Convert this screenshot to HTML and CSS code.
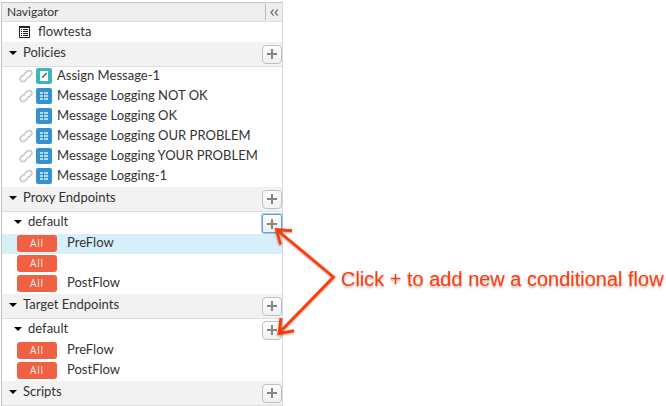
FILE: index.html
```html
<!DOCTYPE html>
<html lang="en">
<head>
<meta charset="utf-8">
<title>Navigator</title>
<link rel="stylesheet" href="styles.css">
</head>
<body>
<svg class="defs" aria-hidden="true">
  <symbol id="link" viewBox="0 0 14 14"><g fill="none" stroke="#c6c6c6" stroke-width="1.600" stroke-linecap="round"><path d="M6 4.200 8 2.300Q9.900.700 11.900 2.200Q13.800 4 12.200 6L10.400 7.700Q9.600 8.300 8.800 8.100"/><path d="M8 9.800 6 11.700Q4.100 13.300 2.100 11.800Q.200 10 1.800 8L3.600 6.300Q4.400 5.700 5.200 5.900"/></g></symbol>
  <symbol id="log" viewBox="0 0 16 16"><rect width="16" height="16" rx="2" fill="#3492d2"/><path d="M4 4h3v2H4zM8 4h4v2H8zM4 7h3v2H4zM8 7h4v2H8zM4 10h3v2H4zM8 10h4v2H8z" fill="#b9dcf2"/></symbol>
  <symbol id="assign" viewBox="0 0 16 16"><rect width="16" height="16" rx="2" fill="#3cb6b9"/><path d="M4 3h8v10H4z" fill="#fff"/><path d="m5.500 10.500 1-2.200 3.700-3.700 1 1-3.700 3.700z" fill="#4c6061"/></symbol>
  <symbol id="plus" viewBox="0 0 10 10"><path d="M5 0v10M0 5h10" stroke="#858585" stroke-width="2"/></symbol>
</svg>
<nav class="panel">
  <header class="head"><span>Navigator</span><span class="collapse"><svg width="9" height="7" viewBox="0 0 9 7"><path d="M3.500.5 1 3.500l2.500 3M7.700.5l-2.500 3 2.500 3" fill="none" stroke="#777" stroke-width="1.300"/></svg></span></header>
  <div class="row root"><svg width="11" height="12" viewBox="0 0 11 12"><path d="M.5 1v10.500h10V1" fill="#fff" stroke="#222"/><path d="M0 0h11v2H0z" fill="#222"/><path d="M2 3.500h1M4 3.500h5M2 5.500h1M4 5.500h5M2 7.500h1M4 7.500h5M2 9.500h1M4 9.500h5" stroke="#222"/></svg><span>flowtesta</span></div>

  <div class="section"><i class="caret"></i><span>Policies</span><button class="add"><svg><use href="#plus"/></svg></button></div>
  <div class="row policy"><svg class="link"><use href="#link"/></svg><svg class="icon"><use href="#assign"/></svg><span>Assign Message-1</span></div>
  <div class="row policy"><svg class="link"><use href="#link"/></svg><svg class="icon"><use href="#log"/></svg><span>Message Logging NOT OK</span></div>
  <div class="row policy"><svg class="link"></svg><svg class="icon"><use href="#log"/></svg><span>Message Logging OK</span></div>
  <div class="row policy"><svg class="link"><use href="#link"/></svg><svg class="icon"><use href="#log"/></svg><span>Message Logging OUR PROBLEM</span></div>
  <div class="row policy"><svg class="link"><use href="#link"/></svg><svg class="icon"><use href="#log"/></svg><span>Message Logging YOUR PROBLEM</span></div>
  <div class="row policy"><svg class="link"><use href="#link"/></svg><svg class="icon"><use href="#log"/></svg><span>Message Logging-1</span></div>

  <div class="section"><i class="caret"></i><span>Proxy Endpoints</span><button class="add"><svg><use href="#plus"/></svg></button></div>
  <div class="endpoint"><i class="caret"></i><span>default</span><button class="add focused"><svg><use href="#plus"/></svg></button></div>
  <div class="row flow selected"><b class="tag">All</b><span>PreFlow</span></div>
  <div class="row flow"><b class="tag">All</b></div>
  <div class="row flow"><b class="tag">All</b><span>PostFlow</span></div>

  <div class="section"><i class="caret"></i><span>Target Endpoints</span><button class="add"><svg><use href="#plus"/></svg></button></div>
  <div class="endpoint"><i class="caret"></i><span>default</span><button class="add"><svg><use href="#plus"/></svg></button></div>
  <div class="row flow"><b class="tag">All</b><span>PreFlow</span></div>
  <div class="row flow"><b class="tag">All</b><span>PostFlow</span></div>

  <div class="section"><i class="caret"></i><span>Scripts</span><button class="add"><svg><use href="#plus"/></svg></button></div>
  <div class="end"></div>
</nav>
<svg class="arrows" width="70" height="120" viewBox="270 220 70 120"><path d="M277 230 333.500 277 279.500 332.500M292 230.700 276.500 229.500 280.500 244.500M281 318 279 333.500 294 330.800" fill="none" stroke="#ff3c0a" stroke-width="2.900"/></svg>
<div class="note">Click + to add new a conditional flow</div>
</body>
</html>
```
FILE: styles.css
```css
* { box-sizing: border-box; }
body {
  margin: 0;
  width: 666px;
  height: 406px;
  overflow: hidden;
  position: relative;
  background: #fff;
  color: #333;
  font: 13.04px/20px Lato, "Liberation Sans", sans-serif;
}
svg { display: block; flex: none; }
.defs { position: absolute; width: 0; height: 0; }
.panel {
  width: 282px;
  height: 404px;
  margin: 2px 0 0 1px;
  border: 1px solid #c4c4c4;
  border-right-color: #d7d9da;
  border-bottom: 0;
  white-space: nowrap;
}
.head {
  display: flex;
  justify-content: space-between;
  align-items: center;
  height: 19px;
  padding-left: 5px;
  background: #eee;
  border-bottom: 1px solid #dedede;
  font-size: 12px;
  line-height: 18px;
}
.collapse {
  display: flex;
  align-items: center;
  width: 17px;
  height: 16px;
  padding-left: 4px;
  border-left: 1px solid #b5bdc0;
}
.row { display: flex; align-items: center; height: 20px; }
.root { padding-left: 17px; gap: 8px; }
.root span { margin-top: -3px; }
.section, .endpoint { display: flex; align-items: center; }
.section {
  height: 25px;
  padding-left: 7px;
  background: #f2f2f2;
  border-bottom: 1px solid #dedede;
}
.section span { margin-top: -4px; }
.endpoint { height: 22px; padding-left: 12px; }
.endpoint span { margin-top: -4px; }
.caret {
  margin: -3px 6px 0 0;
  border: 4px solid transparent;
  border-top-color: #000;
  border-bottom: 0;
}
.add {
  display: grid;
  place-items: center;
  width: 20px;
  height: 19px;
  margin-left: auto;
  padding: 0;
  border: 1px solid #b8c2c6;
  border-radius: 4px;
  background: linear-gradient(#fff, #f0f0f0);
}
.add svg { width: 10px; height: 10px; }
.focused { height: 19px; margin-top: 1px; border-color: #6f9ce8; border-radius: 2px; box-shadow: 0 0 0 1px #a9c5f5; }
.policy { padding-left: 17px; }
.policy span { margin-top: -4px; }
.link { width: 14px; height: 14px; margin: -2px 3px 0 0; }
.icon { width: 16px; height: 16px; margin: -2px 5px 0 0; }
.flow { padding-left: 15px; }
.flow span { margin: -5px 0 0 10px; }
.selected { background: #d7eff9; }
.tag {
  width: 40px;
  height: 17px;
  margin-top: -1px;
  border-radius: 3px;
  background: #ef6142;
  color: #fff0eb;
  font: 10px/16px "Open Sans", sans-serif;
  letter-spacing: .8px;
  text-align: center;
}
.arrows { position: absolute; left: 270px; top: 220px; filter: drop-shadow(0 1px 1px #0005); }
.note {
  position: absolute;
  left: 341px;
  top: 267px;
  color: #ff3c0a;
  font: 20px/24px "Liberation Sans", sans-serif;
  letter-spacing: -.01px;
  white-space: nowrap;
  text-shadow: 0 2px 2px #0004;
}
```
